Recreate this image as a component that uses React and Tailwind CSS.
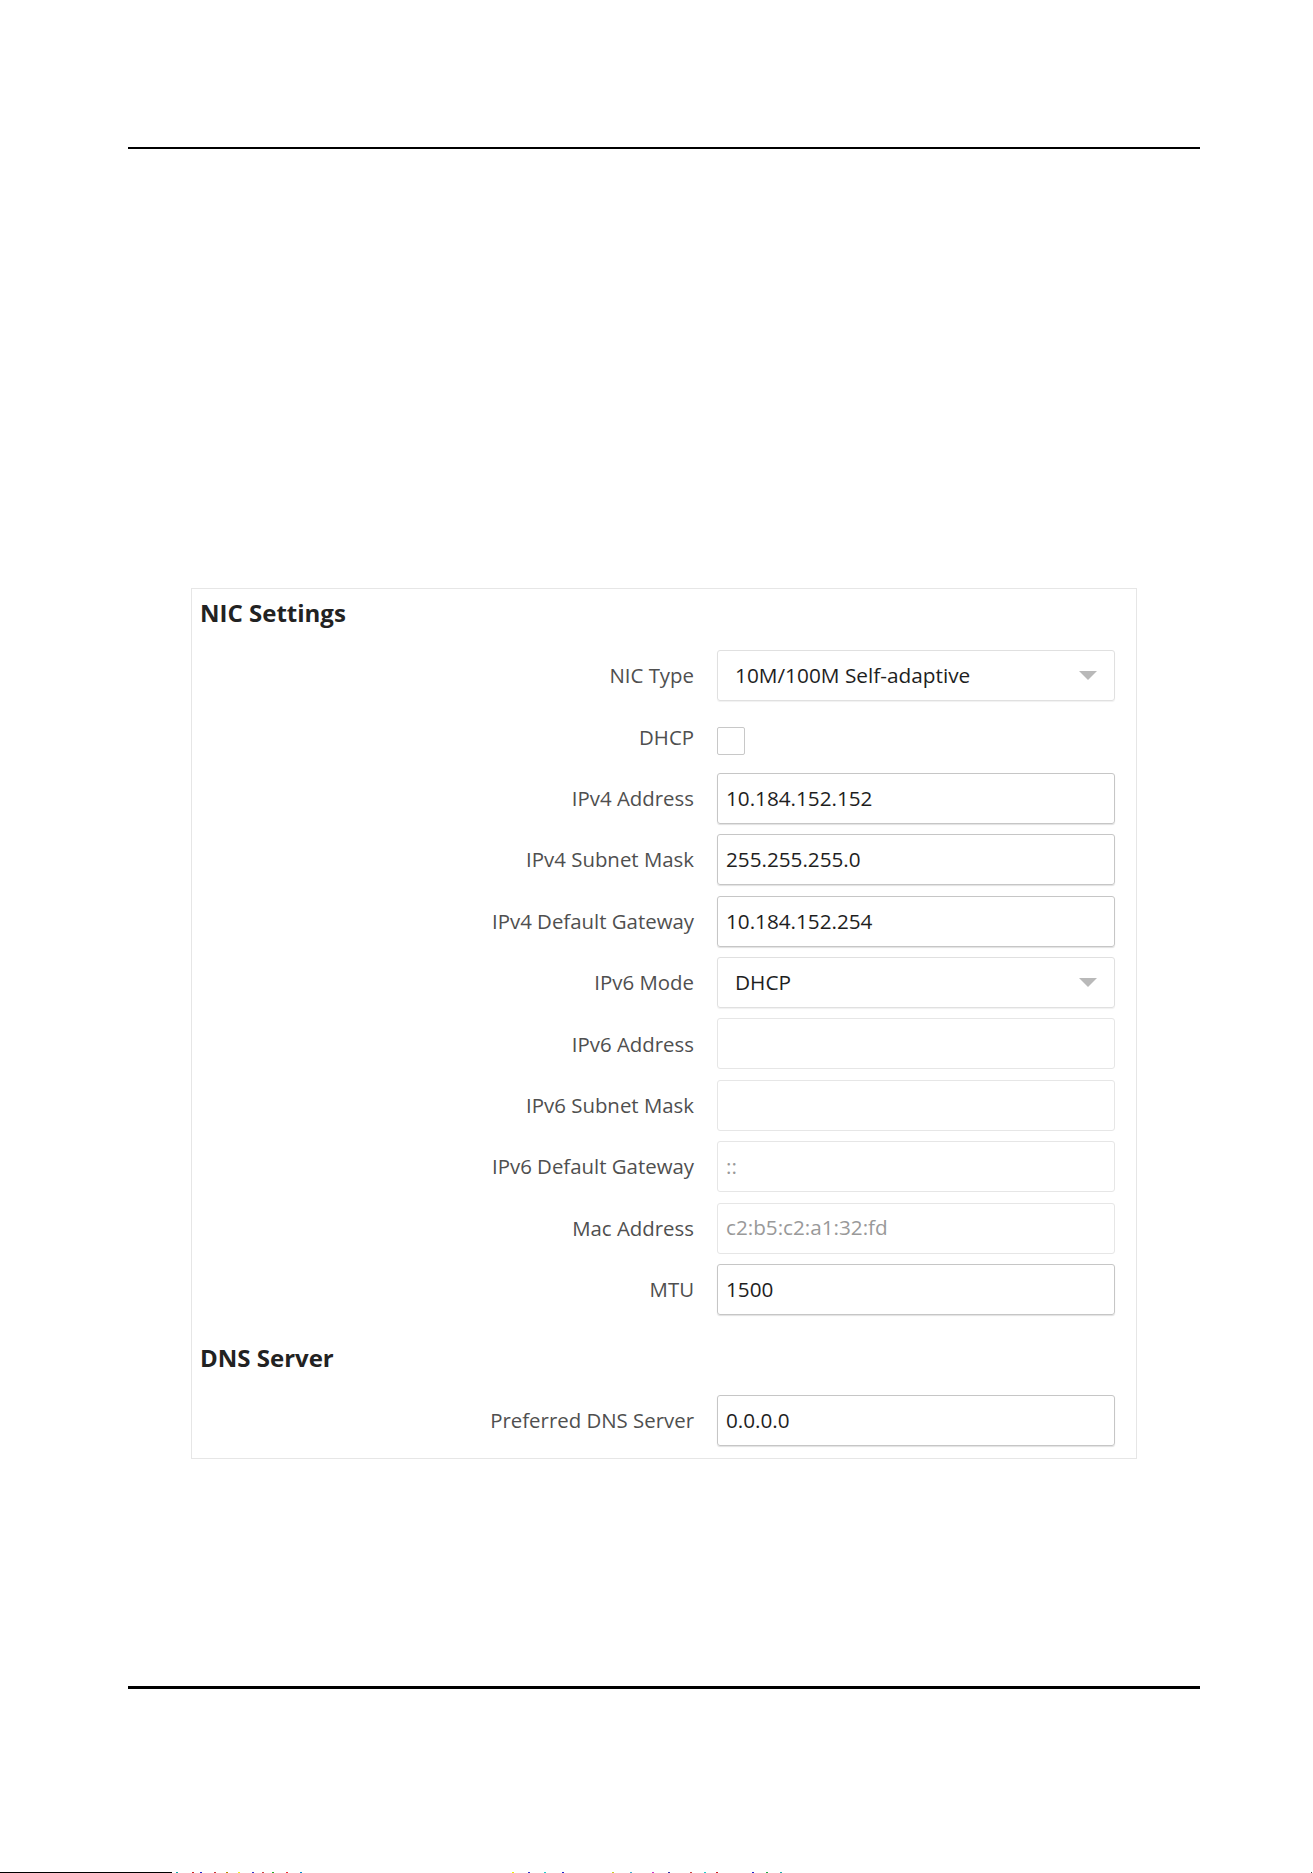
import React from "react";

const FONT = { fontFamily: '"Open Sans", "Noto Sans", Arial, sans-serif' };

function Caret() {
  return (
    <svg width="18" height="9" viewBox="0 0 18 9" className="shrink-0">
      <path d="M0 0 L18 0 L9 9 Z" fill="#b9b9b9" />
    </svg>
  );
}

function Row({ label, children }) {
  return (
    <div className="flex h-[51px] items-center">
      <div className="w-[502px] shrink-0 text-right text-[20.4px] leading-none text-[#4f4f4f]">
        {label}
      </div>
      <div className="ml-[23px] flex h-full w-[398px] items-center">{children}</div>
    </div>
  );
}

function TextBox({ value, muted }) {
  return (
    <div
      className={
        muted
          ? "flex h-full w-full items-center rounded-[3px] border border-[#e6e6e6] px-[8px] text-[20.7px] text-[#999]"
          : "flex h-full w-full items-center rounded-[3px] border border-[#c6c6c6] px-[8px] text-[20.7px] text-[#1e1e1e] shadow-[0_1px_1px_rgba(0,0,0,0.12)]"
      }
    >
      {value}
    </div>
  );
}

function SelectBox({ value }) {
  return (
    <div className="flex h-full w-full items-center justify-between rounded-[3px] border border-[#e0e0e0] pl-[17px] pr-[17px] text-[20.8px] text-[#1e1e1e] shadow-[0_1px_1px_rgba(0,0,0,0.06)]">
      <span>{value}</span>
      <Caret />
    </div>
  );
}

// stray pixels along the last scan line of the page
const specks = [
  [176, "#1aa"], [192, "#c22"], [200, "#22c"], [214, "#c33"], [226, "#b80"],
  [238, "#ee2"], [252, "#33c"], [262, "#c44"], [272, "#2a2"], [286, "#e33"],
  [300, "#08c"], [512, "#ee0"], [528, "#33c"], [544, "#2cc"], [562, "#22c"],
  [612, "#cc2"], [630, "#4ac"], [652, "#c3c"], [668, "#33a"], [690, "#c44"],
  [704, "#2cc"], [716, "#c22"], [752, "#22c"], [766, "#2a4"], [780, "#2aa"],
];

export default function App() {
  return (
    <div className="relative flex h-[1873px] w-[1313px] flex-col bg-white" style={FONT}>
      <div className="ml-[128px] mt-[147px] h-[2px] w-[1072px] bg-black" />

      <section className="ml-[191px] mt-[439px] flex h-[871px] w-[946px] flex-col border border-[#e6e6e6] px-[8px] pb-[12px] pt-[8px]">
        <h2 className="h-[32px] text-[24px] font-bold leading-[32px] text-[#222]">NIC Settings</h2>

        <div className="-ml-[8px] mt-[21px] flex flex-col gap-[10.4px]">
          <Row label="NIC Type">
            <SelectBox value="10M/100M Self-adaptive" />
          </Row>
          <Row label="DHCP">
            <div className="mt-[8px] h-[28px] w-[28px] rounded-[2px] border border-[#c8c8c8] bg-white" />
          </Row>
          <Row label="IPv4 Address">
            <TextBox value="10.184.152.152" />
          </Row>
          <Row label="IPv4 Subnet Mask">
            <TextBox value="255.255.255.0" />
          </Row>
          <Row label="IPv4 Default Gateway">
            <TextBox value="10.184.152.254" />
          </Row>
          <Row label="IPv6 Mode">
            <SelectBox value="DHCP" />
          </Row>
          <Row label="IPv6 Address">
            <TextBox value="" muted />
          </Row>
          <Row label="IPv6 Subnet Mask">
            <TextBox value="" muted />
          </Row>
          <Row label="IPv6 Default Gateway">
            <TextBox value="::" muted />
          </Row>
          <Row label="Mac Address">
            <TextBox value="c2:b5:c2:a1:32:fd" muted />
          </Row>
          <Row label="MTU">
            <TextBox value="1500" />
          </Row>
        </div>

        <h2 className="mt-[27px] h-[32px] text-[24px] font-bold leading-[32px] text-[#222]">DNS Server</h2>

        <div className="-ml-[8px] mt-[21px] flex flex-col">
          <Row label="Preferred DNS Server">
            <TextBox value="0.0.0.0" />
          </Row>
        </div>
      </section>

      <div className="ml-[128px] mt-[227px] h-[3px] w-[1072px] bg-black" />

      <div className="relative mt-auto h-[1px] w-full">
        <div className="absolute left-0 top-0 h-[1px] w-[172px] bg-black" />
        {specks.map(([x, c]) => (
          <div
            key={x}
            className="absolute top-0 h-[1px] w-[2px]"
            style={{ left: x, backgroundColor: c }}
          />
        ))}
        <div className="absolute right-[1px] top-0 h-[1px] w-[1px] bg-[#555]" />
      </div>
    </div>
  );
}
